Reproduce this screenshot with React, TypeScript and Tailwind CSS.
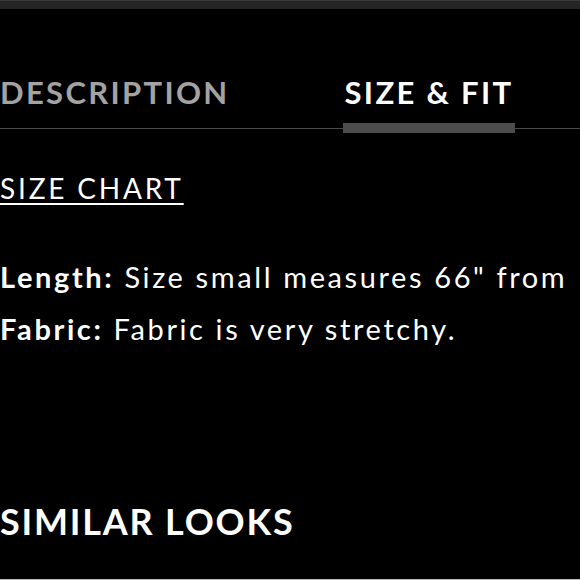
const font = { fontFamily: "Lato, 'Noto Sans', sans-serif" };

function Tabs() {
  return (
    <div className="flex border-b border-[#4a4a4a] pt-[68px] pb-[20px]">
      <button className="text-[31px] leading-none font-bold tracking-[0.075em] text-[#a3a3a3]">
        DESCRIPTION
      </button>
      <button className="relative ml-[113px] px-[2px] text-[31px] leading-none font-bold tracking-[0.075em] text-white">
        SIZE &amp; FIT
        <span className="absolute left-0 right-0 bottom-[-25px] h-[10px] bg-[#4d4d4d]" />
      </button>
    </div>
  );
}

export default function App() {
  return (
    <div className="flex h-[580px] flex-col overflow-hidden bg-black text-white" style={font}>
      <div className="h-[9px] border-t border-[#3a3a3a] bg-[#252525]" />
      <Tabs />
      <a className="mt-[45px] self-start text-[28px] leading-none tracking-[0.1em] underline decoration-2 underline-offset-[4px]">
        SIZE CHART
      </a>
      <div className="mt-[49px] whitespace-nowrap text-[29px] leading-[52px] tracking-[0.09em]">
        <p>
          <span className="font-bold">Length:</span> Size small measures 66" from
        </p>
        <p>
          <span className="font-bold">Fabric:</span> Fabric is very stretchy.
        </p>
      </div>
      <h2 className="mt-[148px] text-[36px] leading-none font-bold tracking-[0.05em]">SIMILAR LOOKS</h2>
      <div className="flex-1" />
      <div className="h-px bg-[#b8b8b8]" />
    </div>
  );
}
